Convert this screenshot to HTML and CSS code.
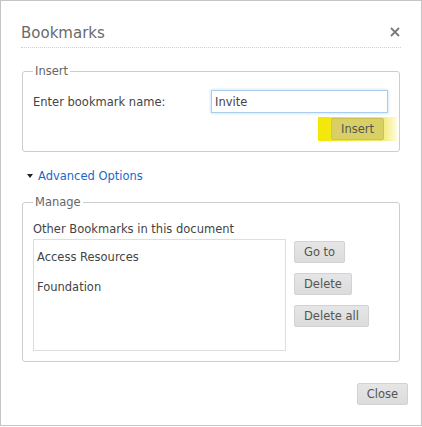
FILE: index.html
```html
<!DOCTYPE html>
<html>
<head>
<meta charset="utf-8">
<link rel="stylesheet" href="styles.css">
</head>
<body>
<div class="dialog">
  <div class="header">
    <h1 class="title">Bookmarks</h1>
    <button class="x" aria-label="Close">
      <svg width="10" height="10" viewBox="0 0 10 10"><path d="M1 1L9 9M9 1L1 9" stroke="#7a7a7a" stroke-width="1.8" fill="none"/></svg>
    </button>
  </div>
  <fieldset class="group insert">
    <legend>Insert</legend>
    <div class="row">
      <label class="label">Enter bookmark name:</label>
      <input class="field" type="text" value="Invite">
    </div>
    <div class="actions">
      <span class="highlight"><button class="btn btn-hl">Insert</button></span>
    </div>
  </fieldset>
  <div class="advanced"><span class="tri"></span><span class="link">Advanced Options</span></div>
  <fieldset class="group manage">
    <legend>Manage</legend>
    <div class="caption">Other Bookmarks in this document</div>
    <div class="listrow">
      <div class="list">
        <div class="item">Access Resources</div>
        <div class="item">Foundation</div>
      </div>
      <div class="btncol">
        <button class="btn">Go to</button>
        <button class="btn">Delete</button>
        <button class="btn">Delete all</button>
      </div>
    </div>
  </fieldset>
  <div class="footer"><button class="btn">Close</button></div>
</div>
</body>
</html>
```
FILE: styles.css
```css
* { box-sizing: border-box; }
html, body { margin: 0; padding: 0; background: #fff; }
body { font-family: "DejaVu Sans", sans-serif; font-size: 11.5px; color: #444; }
.dialog {
  width: 422px; height: 426px;
  border: 1px solid #c4c4c4;
  background: #fff;
}
.header {
  margin: 0 20px;
  padding: 23px 0 5px;
  border-bottom: 1px dotted #cfcfcf;
  display: flex; justify-content: space-between; align-items: center;
}
.title { margin: 0; font-size: 15px; line-height: 18px; font-weight: normal; color: #6a6a6a; }
.x { border: 0; background: none; padding: 0; margin: 0 1px 3px 0; width: 10px; height: 10px; display: block; }
.x svg { display: block; }
.group {
  margin: 16px 21px 0;
  border: 1px solid #cdcdcd;
  border-radius: 3px;
  padding: 12px 11px 10px 10px;
  min-width: 0;
}
.group legend {
  font-size: 11.5px; line-height: 14px; color: #666;
  padding: 0 2px; margin-left: 0px;
}
.row { display: flex; align-items: center; }
.label { width: 178px; line-height: 16px; }
.field {
  width: 177px; height: 23px;
  border: 1px solid #a9cdee;
  box-shadow: 0 0 3px #b7d7f3;
  padding: 0 3px;
  font: inherit; color: #444;
  outline: none;
}
.actions { display: flex; justify-content: flex-end; margin-top: 4px; margin-right: -9px; }
.highlight {
  display: block; padding: 1px 13px;
  background: linear-gradient(to right, #f5e900 0%, #f3e71c 20%, #f1ea6a 80%, #fffbe0 100%);
}
.btn {
  display: block;
  height: 22px; padding: 0 9px;
  border: 1px solid #d2d2d2; border-radius: 2px;
  background: linear-gradient(#e6e6e6, #dcdcdc);
  font: inherit; font-size: 11.5px; color: #555; line-height: 18px;
}
.btn-hl { background: #d8d064; border-color: #cbc355; color: #555; }
.advanced { margin: 16px 0 0 26px; display: flex; align-items: center; line-height: 16px; }
.tri {
  width: 0; height: 0;
  border-left: 3.5px solid transparent; border-right: 3.5px solid transparent;
  border-top: 4px solid #222;
  margin-right: 5px;
}
.link { color: #1a67c9; font-size: 11.5px; }
.manage { margin-top: 11px; padding-top: 12px; }
.caption { line-height: 16px; }
.listrow { display: flex; align-items: flex-start; margin-top: 2px; }
.list {
  width: 253px; height: 112px;
  border: 1px solid #dedede;
  padding: 9px 3px 0;
}
.item { line-height: 16px; margin-bottom: 14px; }
.btncol { margin-left: 8px; margin-top: 2px; display: flex; flex-direction: column; align-items: flex-start; gap: 10px; }
.footer { display: flex; justify-content: flex-end; padding: 21px 13px 0 0; }
```
